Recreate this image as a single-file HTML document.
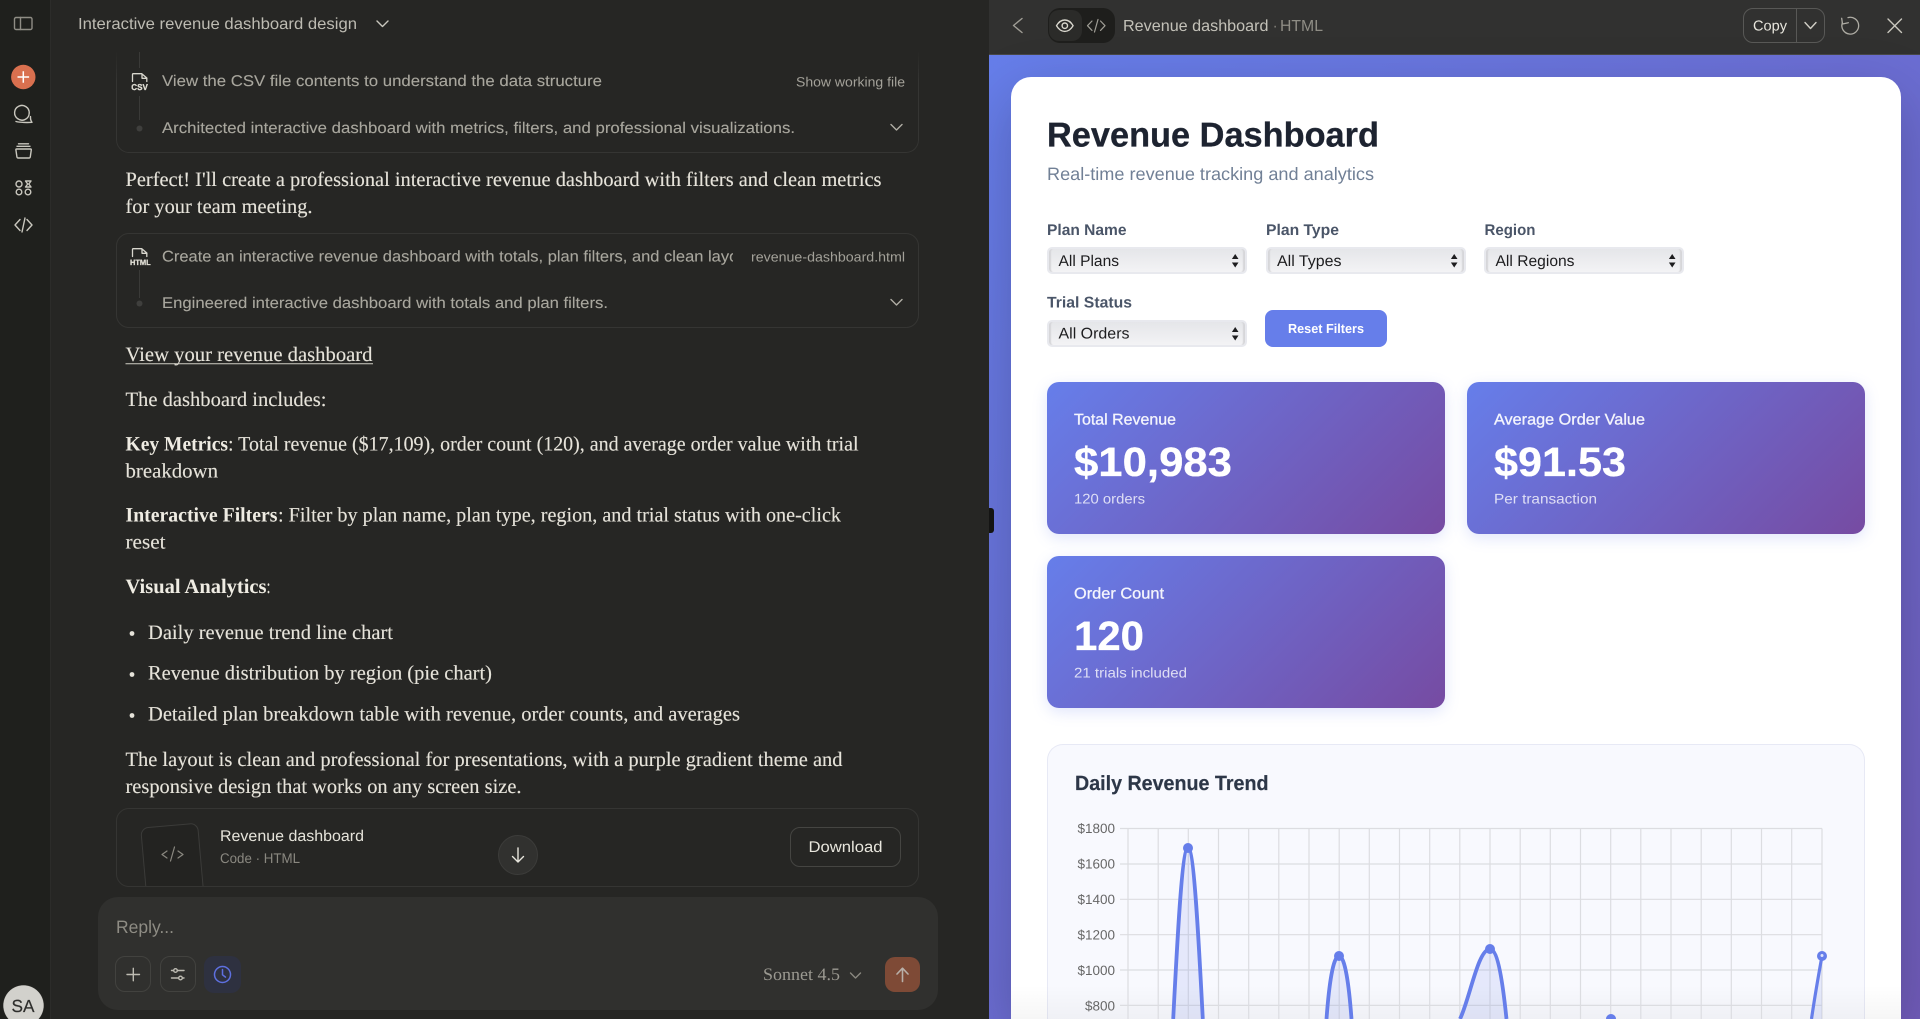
<!DOCTYPE html>
<html><head><meta charset="utf-8"><title>Revenue dashboard</title>
<style>
html,body{margin:0;padding:0;width:1920px;height:1019px;overflow:hidden;background:#262624}
#root{position:relative;width:1920px;height:1019px;overflow:hidden;background:#262624}
.a{position:absolute;box-sizing:border-box}
svg{position:absolute;left:0;top:0;display:block;text-rendering:geometricPrecision}
text{white-space:pre}
.se{font-family:"Liberation Serif",serif;font-size:20.5px;fill:#e6e3da;stroke:#e6e3da;stroke-width:.12}
.b{font-weight:700;fill:#efece3;stroke:none}
.sa{font-family:"Liberation Sans",sans-serif}
.tl{font-size:15.5px;fill:#a9a79e;stroke:#a9a79e;stroke-width:.1}
.sel{background:linear-gradient(#e5e6e9,#f3f3f5);border:2px solid #e8e9ee;border-radius:5px;width:200px;height:27px;box-shadow:inset 3px 0 1px -1px #d6d6d9,inset -3px 0 1px -1px #d6d6d9}
.mc{background:linear-gradient(135deg,#667eea,#764ba2);border-radius:12px;box-shadow:0 4px 15px rgba(102,126,234,.2);width:398px;height:152px}
.lab{font-size:15.5px;font-weight:700;fill:#4a5568}
.opt{font-size:15.5px;fill:#1d1d1f}
.mt{font-size:15.5px;fill:#fff;fill-opacity:.92;stroke:#fff;stroke-opacity:.7;stroke-width:.4}
.mv{font-size:41px;font-weight:700;fill:#fff;stroke:#fff;stroke-width:.3}
.ms{font-size:14px;fill:#fff;fill-opacity:.78}
.ax{font-size:13.5px;fill:#666}
.ic{fill:none;stroke:#b0aea5;stroke-width:1.4;stroke-linecap:round;stroke-linejoin:round}
.gr{stroke:#dcdde1;stroke-width:1.2}
.ln{fill:rgba(102,126,234,.13);stroke:#667eea;stroke-width:3.8}
</style></head>
<body>
<div id="root">
<!-- left sidebar -->
<div class="a" style="left:0;top:0;width:51px;height:1019px;background:#1f201d;border-right:1px solid #2c2c2a"></div>

<!-- tool boxes -->
<div class="a" style="left:116px;top:40px;width:803px;height:113px;border:1px solid #353533;border-radius:0 0 13px 13px;border-top:0;-webkit-mask-image:linear-gradient(transparent 10px,#000 40px)"></div>
<div class="a" style="left:116px;top:233px;width:803px;height:95px;border:1px solid #353533;border-radius:13px"></div>

<!-- artifact box -->
<div class="a" style="left:116px;top:808px;width:803px;height:79px;border:1px solid #353533;border-radius:13px;overflow:hidden">
  <div class="a" style="left:27px;top:16px;width:58px;height:90px;background:#232321;border:1px solid #3b3b39;border-radius:8px;transform:rotate(-5deg)"></div>
</div>
<div class="a" style="left:790px;top:827px;width:111px;height:40px;border:1px solid #454542;border-radius:10px"></div>
<div class="a" style="left:498px;top:835px;width:40px;height:40px;background:#31312f;border:1px solid #3c3c3a;border-radius:50%"></div>

<!-- input -->
<div class="a" style="left:98px;top:897px;width:840px;height:113px;background:#30302e;border-radius:20px"></div>
<div class="a" style="left:115px;top:956px;width:36px;height:36px;border:1px solid #42423f;border-radius:10px"></div>
<div class="a" style="left:160px;top:956px;width:36px;height:36px;border:1px solid #42423f;border-radius:10px"></div>
<div class="a" style="left:204px;top:956px;width:37px;height:37px;background:#2e3140;border-radius:10px"></div>
<div class="a" style="left:885px;top:957px;width:35px;height:35px;background:#7e4a36;border-radius:10px"></div>
<div class="a" style="left:3px;top:985px;width:41px;height:34px;background:radial-gradient(circle 20.5px at 20.5px 20.5px,#d2d1cc 97%,rgba(210,209,204,0) 100%)"></div>

<!-- right panel -->
<div class="a" style="left:989px;top:0;width:931px;height:1019px;overflow:hidden;background:#313130">
  <div class="a" style="left:0;top:55px;width:931px;height:964px;background:linear-gradient(135deg,#667eea,#764ba2) 0 0/931px 1900px no-repeat"></div>
  <div class="a" style="left:0;top:54px;width:931px;height:1px;background:#484848"></div>
  <div class="a" style="left:22px;top:77px;width:890px;height:942px;background:#fff;border-radius:20px 20px 0 0;box-shadow:0 20px 60px rgba(0,0,0,.22)"></div>
  <div class="a" style="left:59px;top:8px;width:67px;height:35px;background:#1e1e1c;border-radius:12px"></div>
  <div class="a" style="left:60px;top:10px;width:33px;height:31px;background:#2b2b29;border-radius:10px"></div>
  <div class="a" style="left:754px;top:8px;width:82px;height:35px;border:1px solid #585856;border-radius:10px"></div>
  <div class="a" style="left:807px;top:8px;width:1px;height:35px;background:#585856"></div>
  <!-- selects -->
  <div class="a sel" style="left:58px;top:247px"></div>
  <div class="a sel" style="left:277px;top:247px"></div>
  <div class="a sel" style="left:495px;top:247px"></div>
  <div class="a sel" style="left:58px;top:320px"></div>
  <div class="a" style="left:276px;top:310px;width:122px;height:37px;background:#667eea;border-radius:8px"></div>
  <!-- metric cards -->
  <div class="a mc" style="left:58px;top:382px"></div>
  <div class="a mc" style="left:478px;top:382px"></div>
  <div class="a mc" style="left:58px;top:556px"></div>
  <!-- chart card -->
  <div class="a" style="left:58px;top:744px;width:818px;height:275px;background:#f8f9fe;border:1.5px solid #e7e9f5;border-bottom:0;border-radius:16px 16px 0 0"></div>
  <div class="a" style="left:22px;top:985px;width:890px;height:34px;background:linear-gradient(rgba(0,0,0,0),rgba(0,0,0,.035))"></div>
</div>
<div class="a" style="left:989px;top:508px;width:5px;height:25px;background:#141413;border-radius:0 3px 3px 0"></div>

<svg width="1920" height="1019" viewBox="0 0 1920 1019">
<defs><clipPath id="c1"><rect x="150" y="240" width="583" height="32"/></clipPath></defs>

<!-- sidebar icons -->
<g class="ic" style="stroke:#8f8d85">
<rect x="14.5" y="17.5" width="17.5" height="12" rx="1.5"/><path d="M20.5 17.5v12"/>
</g>
<circle cx="23.3" cy="77" r="12.2" fill="#d9704f"/>
<path d="M17.5 77h11.6M23.3 71.2v11.6" stroke="#fff" stroke-width="1.5" fill="none"/>
<g class="ic" style="stroke:#c9c7be">
<path d="M17.7 118.7a7.3 7.3 0 1 1 11.5-5.7"/>
<path d="M29.2 113c0 3-1.8 5.6-4.5 6.7-2.2.9-5 .5-7-1"/>
<path d="M16 121.5c4 1 11.5 1.2 16 .8-1-1.2-1.7-3-1.5-5.7"/>
<path d="M17 149h13.5c.4 0 .8.3.8.8l-1 7c-.1.7-.7 1.2-1.4 1.2h-10.6c-.7 0-1.3-.5-1.4-1.2l-1-7c0-.5.3-.8.6-.8z"/>
<path d="M17 146.3h13M18.5 143.8h10"/>
<circle cx="19" cy="184" r="3"/><path d="M25.5 181h5.5l-2.2 3 2.2 3h-5.5l2.2-3z"/>
<circle cx="19" cy="192" r="2.8"/><circle cx="28" cy="192" r="2.8"/>
<path d="M20 219.5l-5 5.5 5 5.5M27 219.5l5 5.5-5 5.5M25 218l-3 14"/>
<path d="M377 21l5.5 5.5 5.5-5.5"/>
</g>
<text class="sa" x="78" y="29" font-size="16" fill="#bdbbb2" textLength="279" lengthAdjust="spacingAndGlyphs">Interactive revenue dashboard design</text>

<!-- tool box 1 -->
<path d="M139.5 52v16M139.5 96v24M139.5 270v28" stroke="#3a3a38" stroke-width="1"/>
<circle cx="139.5" cy="128.5" r="3" fill="#3f3f3d"/><circle cx="139.5" cy="303.5" r="3" fill="#3f3f3d"/>
<g class="ic" style="stroke:#d8d6cd;stroke-width:1.3"><path d="M132.5 81.5v-7c0-.5.3-.8.8-.8h8.5l5 4.3v3.5M142 74v4.3h5"/>
<path d="M132.5 256.5v-7c0-.5.3-.8.8-.8h8.5l5 4.3v3.5M142 249v4.3h5"/></g>
<text class="sa" x="131.3" y="90" font-size="8.5" font-weight="700" fill="#e0ded5" stroke="#e0ded5" stroke-width=".3" textLength="16.5" lengthAdjust="spacingAndGlyphs">CSV</text>
<text class="sa" x="130" y="265" font-size="7.8" font-weight="700" fill="#e0ded5" stroke="#e0ded5" stroke-width=".3" textLength="20.7" lengthAdjust="spacingAndGlyphs">HTML</text>
<text class="sa tl" x="162" y="86" textLength="440" lengthAdjust="spacingAndGlyphs">View the CSV file contents to understand the data structure</text>
<text class="sa" x="796" y="86.5" font-size="13.5" fill="#a3a199" textLength="109" lengthAdjust="spacingAndGlyphs">Show working file</text>
<text class="sa tl" x="162" y="133" textLength="633" lengthAdjust="spacingAndGlyphs">Architected interactive dashboard with metrics, filters, and professional visualizations.</text>
<g class="ic"><path d="M891 124.5l5.5 5.5 5.500-5.500M891 299.500l5.500 5.500 5.500-5.500"/></g>

<text class="se" x="125.5" y="186" textLength="756" lengthAdjust="spacingAndGlyphs">Perfect! I'll create a professional interactive revenue dashboard with filters and clean metrics</text>
<text class="se" x="125.5" y="213" textLength="187" lengthAdjust="spacingAndGlyphs">for your team meeting.</text>

<text class="sa tl" x="162" y="261.5" textLength="590" lengthAdjust="spacingAndGlyphs" clip-path="url(#c1)">Create an interactive revenue dashboard with totals, plan filters, and clean layout</text>
<text class="sa" x="751" y="261.5" font-size="13.5" fill="#a3a199" textLength="154" lengthAdjust="spacingAndGlyphs">revenue-dashboard.html</text>
<text class="sa tl" x="162" y="308" textLength="446" lengthAdjust="spacingAndGlyphs">Engineered interactive dashboard with totals and plan filters.</text>

<text class="se" x="125.5" y="361" textLength="247" lengthAdjust="spacingAndGlyphs">View your revenue dashboard</text>
<path d="M125.5 363.8H373" stroke="#cfcdc4" stroke-width="1"/>
<text class="se" x="125.5" y="406" textLength="201" lengthAdjust="spacingAndGlyphs">The dashboard includes:</text>

<text class="se b" x="125.5" y="450.5" textLength="102.5" lengthAdjust="spacingAndGlyphs">Key Metrics</text>
<text class="se" x="228" y="450.5" textLength="630.5" lengthAdjust="spacingAndGlyphs">: Total revenue ($17,109), order count (120), and average order value with trial</text>
<text class="se" x="125.5" y="477.5" textLength="92.5" lengthAdjust="spacingAndGlyphs">breakdown</text>

<text class="se b" x="125.5" y="521.5" textLength="152" lengthAdjust="spacingAndGlyphs">Interactive Filters</text>
<text class="se" x="278" y="521.5" textLength="563" lengthAdjust="spacingAndGlyphs">: Filter by plan name, plan type, region, and trial status with one-click</text>
<text class="se" x="125.5" y="548.5" textLength="40" lengthAdjust="spacingAndGlyphs">reset</text>

<text class="se b" x="125.5" y="593" textLength="141" lengthAdjust="spacingAndGlyphs">Visual Analytics</text>
<text class="se" x="266.5" y="593" textLength="4" lengthAdjust="spacingAndGlyphs">:</text>

<circle cx="132" cy="633.5" r="2.4" fill="#e6e3da"/><circle cx="132" cy="674.5" r="2.4" fill="#e6e3da"/><circle cx="132" cy="715.5" r="2.4" fill="#e6e3da"/>
<text class="se" x="148" y="639" textLength="245" lengthAdjust="spacingAndGlyphs">Daily revenue trend line chart</text>
<text class="se" x="148" y="679.5" textLength="344" lengthAdjust="spacingAndGlyphs">Revenue distribution by region (pie chart)</text>
<text class="se" x="148" y="720.5" textLength="592" lengthAdjust="spacingAndGlyphs">Detailed plan breakdown table with revenue, order counts, and averages</text>

<text class="se" x="125.5" y="766" textLength="717" lengthAdjust="spacingAndGlyphs">The layout is clean and professional for presentations, with a purple gradient theme and</text>
<text class="se" x="125.5" y="793" textLength="396" lengthAdjust="spacingAndGlyphs">responsive design that works on any screen size.</text>

<!-- artifact -->
<g class="ic" style="stroke:#8a8880;stroke-width:1.2"><path d="M167 851l-5 3.5 5 3.5M178 851l5 3.5-5 3.5M174.5 847l-4 14"/></g>
<text class="sa" x="220" y="841" font-size="15.5" fill="#e5e3da" textLength="144" lengthAdjust="spacingAndGlyphs">Revenue dashboard</text>
<text class="sa" x="220" y="863" font-size="14" fill="#8a8880" textLength="80" lengthAdjust="spacingAndGlyphs">Code · HTML</text>
<g class="ic" style="stroke:#e8e6dd"><path d="M518 848v14M512.5 856.5l5.5 5.5 5.5-5.5"/></g>
<text class="sa" x="808.5" y="852" font-size="15.5" fill="#e8e6dd" textLength="74" lengthAdjust="spacingAndGlyphs">Download</text>

<!-- input -->
<text class="sa" x="116" y="933" font-size="18" fill="#8e8c84" textLength="58" lengthAdjust="spacingAndGlyphs">Reply...</text>
<g class="ic" style="stroke:#bdbbb2"><path d="M127 974.500h12.500M133.300 968.300v12.500"/>
<path d="M171.500 970.500h12.500M171.500 978h12.500"/><circle cx="175.500" cy="970.500" r="1.800" fill="#30302e"/><circle cx="180.500" cy="978" r="1.800" fill="#30302e"/></g>
<g fill="none" stroke="#5e70e0" stroke-width="1.500" stroke-linecap="round"><circle cx="222.500" cy="974.500" r="8"/><path d="M222.500 969.500v5.300l3 2.300"/></g>
<text class="se" x="763" y="980" style="font-size:17.5px;fill:#9b9991;stroke:none" textLength="77" lengthAdjust="spacingAndGlyphs">Sonnet 4.5</text>
<g class="ic" style="stroke:#8a8880"><path d="M850.500 973l5 5 5-5"/></g>
<g class="ic" style="stroke:#b8afa8;stroke-width:1.600"><path d="M902.500 981.500v-13M897 974l5.500-5.800 5.500 5.800"/></g>
<text class="sa" x="11.500" y="1012" font-size="17.500" fill="#2e2e2c" stroke="#2e2e2c" stroke-width=".2" textLength="23" lengthAdjust="spacingAndGlyphs">SA</text>

<!-- right header -->
<g class="ic" style="stroke:#9f9d95"><path d="M1022 18.500l-8.500 7 8.500 7"/></g>
<g class="ic" style="stroke:#d9d7ce"><path d="M1056.500 25.700c2.200-3.800 5-5.700 8.300-5.700s6.100 1.900 8.300 5.700c-2.200 3.800-5 5.700-8.300 5.700s-6.100-1.900-8.300-5.700z"/><circle cx="1064.800" cy="25.700" r="2.700"/></g>
<g class="ic" style="stroke:#a09e96;stroke-width:1.200"><path d="M1092 21l-4.500 4.700 4.500 4.700M1100.500 21l4.500 4.700-4.500 4.700M1098 19.500l-3.500 12.500"/></g>
<text class="sa" x="1123" y="31" font-size="16" fill="#c3c1b8" textLength="145.500" lengthAdjust="spacingAndGlyphs">Revenue dashboard</text>
<text class="sa" x="1272.500" y="31" font-size="16" fill="#7e7c75">·</text>
<text class="sa" x="1280" y="31" font-size="16" fill="#8f8d85" textLength="43" lengthAdjust="spacingAndGlyphs">HTML</text>
<text class="sa" x="1753" y="30.500" font-size="14.500" fill="#e8e6dd" textLength="34" lengthAdjust="spacingAndGlyphs">Copy</text>
<g class="ic" style="stroke:#d0cec5"><path d="M1805 22.500l5.500 6 5.500-6"/></g>
<g class="ic" style="stroke:#aeaca4;stroke-width:1.300"><path d="M1848 17.600A8.400 8.400 0 1 1 1842.300 23"/><path d="M1841.700 18.300L1842.500 24L1848.300 22.700"/></g>
<g class="ic" style="stroke:#c9c7be"><path d="M1888 19l13.500 13.500M1901.500 19l-13.500 13.500"/></g>

<!-- dashboard -->
<text class="sa" x="1047" y="146.500" font-size="34.500" font-weight="700" fill="#1d2330" stroke="#1d2330" stroke-width=".3" textLength="332" lengthAdjust="spacingAndGlyphs">Revenue Dashboard</text>
<text class="sa" x="1047" y="180" font-size="18" fill="#718096" textLength="327" lengthAdjust="spacingAndGlyphs">Real-time revenue tracking and analytics</text>

<text class="sa lab" x="1047" y="235" textLength="79.500" lengthAdjust="spacingAndGlyphs">Plan Name</text>
<text class="sa lab" x="1266" y="235" textLength="73" lengthAdjust="spacingAndGlyphs">Plan Type</text>
<text class="sa lab" x="1484.500" y="235" textLength="51" lengthAdjust="spacingAndGlyphs">Region</text>
<text class="sa lab" x="1047" y="307.500" textLength="85" lengthAdjust="spacingAndGlyphs">Trial Status</text>

<text class="sa opt" x="1058.500" y="266" textLength="60.500" lengthAdjust="spacingAndGlyphs">All Plans</text>
<text class="sa opt" x="1277" y="266" textLength="64.500" lengthAdjust="spacingAndGlyphs">All Types</text>
<text class="sa opt" x="1495.500" y="266" textLength="79" lengthAdjust="spacingAndGlyphs">All Regions</text>
<text class="sa opt" x="1058.500" y="338.500" textLength="71" lengthAdjust="spacingAndGlyphs">All Orders</text>
<g fill="#1d1d1f">
<path d="M1235.200 254l3.300 5h-6.600zM1235.200 267.500l3.300-5h-6.600zM1454.200 254l3.300 5h-6.600zM1454.200 267.500l3.300-5h-6.600zM1672.200 254l3.300 5h-6.600zM1672.200 267.500l3.300-5h-6.600zM1235.200 327l3.300 5h-6.600zM1235.200 340.500l3.300-5h-6.600z"/>
</g>
<text class="sa" x="1288" y="332.800" font-size="13" font-weight="700" fill="#fff" textLength="76" lengthAdjust="spacingAndGlyphs">Reset Filters</text>

<text class="sa mt" x="1074" y="424.500" textLength="102" lengthAdjust="spacingAndGlyphs">Total Revenue</text>
<text class="sa mv" x="1074" y="476" textLength="158" lengthAdjust="spacingAndGlyphs">$10,983</text>
<text class="sa ms" x="1074" y="503.500" textLength="71" lengthAdjust="spacingAndGlyphs">120 orders</text>
<text class="sa mt" x="1494" y="424.500" textLength="151" lengthAdjust="spacingAndGlyphs">Average Order Value</text>
<text class="sa mv" x="1494" y="476" textLength="132" lengthAdjust="spacingAndGlyphs">$91.53</text>
<text class="sa ms" x="1494" y="503.500" textLength="103" lengthAdjust="spacingAndGlyphs">Per transaction</text>
<text class="sa mt" x="1074" y="598.500" textLength="90" lengthAdjust="spacingAndGlyphs">Order Count</text>
<text class="sa mv" x="1074" y="650" textLength="70" lengthAdjust="spacingAndGlyphs">120</text>
<text class="sa ms" x="1074" y="677.500" textLength="113" lengthAdjust="spacingAndGlyphs">21 trials included</text>

<text class="sa" x="1075" y="790" font-size="20.500" font-weight="700" fill="#2d3748" stroke="#2d3748" stroke-width=".2" textLength="193.500" lengthAdjust="spacingAndGlyphs">Daily Revenue Trend</text>

<g class="sa ax" text-anchor="end">
<text x="1115" y="833">$1800</text><text x="1115" y="868.500">$1600</text><text x="1115" y="904">$1400</text><text x="1115" y="939.500">$1200</text><text x="1115" y="975">$1000</text><text x="1115" y="1010.500">$800</text>
</g>
<path class="gr" d="M1120 828.500H1822M1120 864H1822M1120 899.300H1822M1120 934.700H1822M1120 970H1822M1120 1005.400H1822"/>
<path class="gr" d="M1128 828.500V1019M1158.200 828.500V1019M1188.300 828.500V1019M1218.500 828.500V1019M1248.700 828.500V1019M1278.800 828.500V1019M1309 828.500V1019M1339.200 828.500V1019M1369.300 828.500V1019M1399.500 828.500V1019M1429.700 828.500V1019M1459.800 828.500V1019M1490 828.500V1019M1520.200 828.500V1019M1550.300 828.500V1019M1580.500 828.500V1019M1610.700 828.500V1019M1640.800 828.500V1019M1671 828.500V1019M1701.200 828.500V1019M1731.300 828.500V1019M1761.500 828.500V1019M1791.700 828.500V1019M1822 828.500V1019"/>

<path class="ln" d="M1173.200 1019C1177.500 936 1182 848 1188 848C1194 848 1198.500 936 1202.800 1019"/>
<path class="ln" d="M1326.500 1019C1329 985 1333 956 1339 956C1345 956 1349 985 1351.500 1019"/>
<path class="ln" d="M1460 1019C1470 998 1478 949 1490 949C1498 949 1503 985 1506.500 1019"/>
<path d="M1811.500 1019C1815 995 1818 978 1822 956V1019Z" fill="rgba(102,126,234,.13)"/>
<path d="M1811.500 1019C1815 995 1818 978 1822 956" fill="none" stroke="#667eea" stroke-width="3.200"/>
<g fill="#667eea"><circle cx="1188" cy="848" r="5"/><circle cx="1339" cy="956" r="5"/><circle cx="1490" cy="949" r="5"/><circle cx="1822" cy="956" r="5"/><path d="M1606 1019A5 5 0 0 1 1616 1019Z"/></g>
<circle cx="1822" cy="955.500" r="1.500" fill="#dfe3fb"/>
</svg>
</div>
</body></html>
